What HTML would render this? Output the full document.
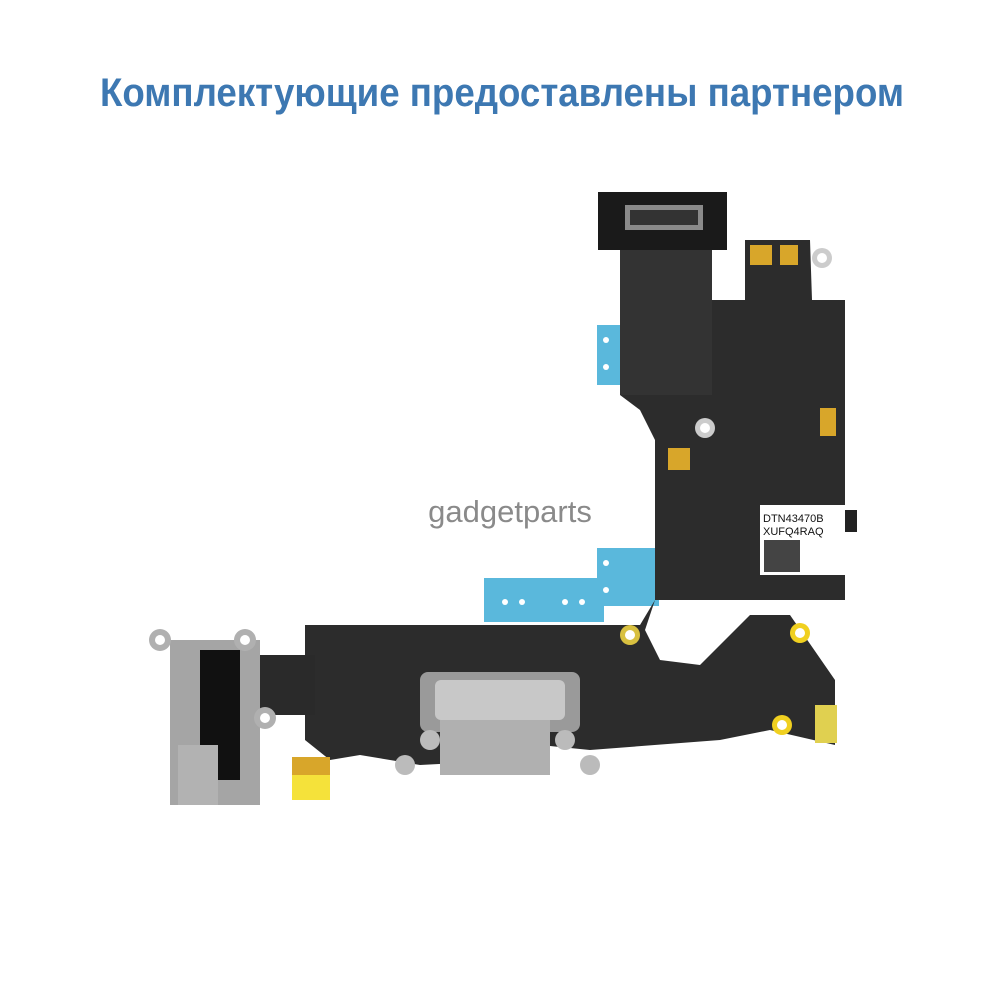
<!DOCTYPE html>
<html><head><meta charset="utf-8"><style>
html,body{margin:0;padding:0;background:#fff;width:1000px;height:1000px;overflow:hidden}
svg{display:block}
</style></head><body>
<svg width="1000" height="1000" viewBox="0 0 1000 1000" xmlns="http://www.w3.org/2000/svg">
<text x="502" y="106" text-anchor="middle" font-family="Liberation Sans, sans-serif" font-weight="bold" font-size="40" fill="#3d78b2" textLength="804" lengthAdjust="spacingAndGlyphs">Комплектующие предоставлены партнером</text>
<!-- blue tabs -->
<rect x="597" y="325" width="65" height="60" fill="#5ab8dc"/>
<rect x="597" y="548" width="62" height="58" fill="#5ab8dc"/>
<rect x="484" y="578" width="120" height="44" fill="#5ab8dc"/>
<circle cx="606" cy="340" r="3" fill="#fff"/><circle cx="606" cy="367" r="3" fill="#fff"/>
<circle cx="606" cy="563" r="3" fill="#fff"/><circle cx="606" cy="590" r="3" fill="#fff"/>
<circle cx="505" cy="602" r="3" fill="#fff"/><circle cx="522" cy="602" r="3" fill="#fff"/>
<circle cx="565" cy="602" r="3" fill="#fff"/><circle cx="582" cy="602" r="3" fill="#fff"/>
<!-- flex body -->
<path d="M620 250 L710 250 L710 300 L745 300 L745 240 L810 240 L812 300 L845 300 L845 600 L655 600 L645 630 L660 660 L700 665 L750 615 L790 615 L835 680 L835 745 L770 730 L720 740 L590 750 L540 745 L515 760 L420 765 L360 755 L330 760 L305 740 L305 625 L640 625 L655 600 L655 440 L640 410 L620 395 Z" fill="#2c2c2c"/>
<rect x="620" y="250" width="92" height="145" fill="#333"/>
<rect x="255" y="655" width="60" height="60" fill="#2a2a2a"/>
<!-- top connector -->
<rect x="598" y="192" width="129" height="58" fill="#1a1a1a"/>
<rect x="625" y="205" width="78" height="25" fill="#8a8a8a"/>
<rect x="630" y="210" width="68" height="15" fill="#333"/>
<!-- label -->
<rect x="760" y="505" width="85" height="70" fill="#fff"/>
<rect x="845" y="510" width="12" height="22" fill="#222"/>
<text x="763" y="522" font-family="Liberation Sans, sans-serif" font-size="11" fill="#111">DTN43470B</text>
<text x="763" y="535" font-family="Liberation Sans, sans-serif" font-size="11" fill="#111">XUFQ4RAQ</text>
<rect x="764" y="540" width="36" height="32" fill="#444"/>
<!-- gold pads -->
<rect x="750" y="245" width="22" height="20" fill="#d8a62a"/>
<rect x="780" y="245" width="18" height="20" fill="#d8a62a"/>
<rect x="820" y="408" width="16" height="28" fill="#d8a62a"/>
<rect x="668" y="448" width="22" height="22" fill="#d8a62a"/>
<rect x="292" y="757" width="38" height="22" fill="#d8a62a"/>
<rect x="292" y="775" width="38" height="25" fill="#f5e23a"/>
<!-- metal tabs -->
<circle cx="822" cy="258" r="10" fill="#ccc"/><circle cx="822" cy="258" r="5" fill="#fff"/>
<circle cx="705" cy="428" r="10" fill="#ccc"/><circle cx="705" cy="428" r="5" fill="#fff"/>
<circle cx="630" cy="635" r="10" fill="#d8c040"/><circle cx="630" cy="635" r="5" fill="#fff"/>
<circle cx="800" cy="633" r="10" fill="#f0d020"/><circle cx="800" cy="633" r="5" fill="#fff"/>
<circle cx="782" cy="725" r="10" fill="#f0d020"/><circle cx="782" cy="725" r="5" fill="#fff"/>
<rect x="815" y="705" width="22" height="38" fill="#e0d050"/>
<!-- lightning connector -->
<rect x="420" y="672" width="160" height="60" rx="8" fill="#9a9a9a"/>
<rect x="435" y="680" width="130" height="40" rx="6" fill="#c8c8c8"/>
<rect x="440" y="720" width="110" height="55" fill="#b0b0b0"/>
<circle cx="430" cy="740" r="10" fill="#bbb"/><circle cx="565" cy="740" r="10" fill="#bbb"/>
<circle cx="405" cy="765" r="10" fill="#bbb"/><circle cx="590" cy="765" r="10" fill="#bbb"/>
<!-- audio jack -->
<rect x="170" y="640" width="90" height="165" fill="#a5a5a5"/>
<rect x="200" y="650" width="40" height="130" fill="#111"/>
<rect x="178" y="745" width="40" height="60" fill="#b2b2b2"/>
<circle cx="160" cy="640" r="11" fill="#b0b0b0"/><circle cx="160" cy="640" r="5" fill="#fff"/>
<circle cx="245" cy="640" r="11" fill="#b0b0b0"/><circle cx="245" cy="640" r="5" fill="#fff"/>
<circle cx="265" cy="718" r="11" fill="#b0b0b0"/><circle cx="265" cy="718" r="5" fill="#fff"/>
<text x="510" y="522" text-anchor="middle" font-family="Liberation Sans, sans-serif" font-size="31" fill="#8a8a8a">gadgetparts</text>
</svg>
</body></html>
